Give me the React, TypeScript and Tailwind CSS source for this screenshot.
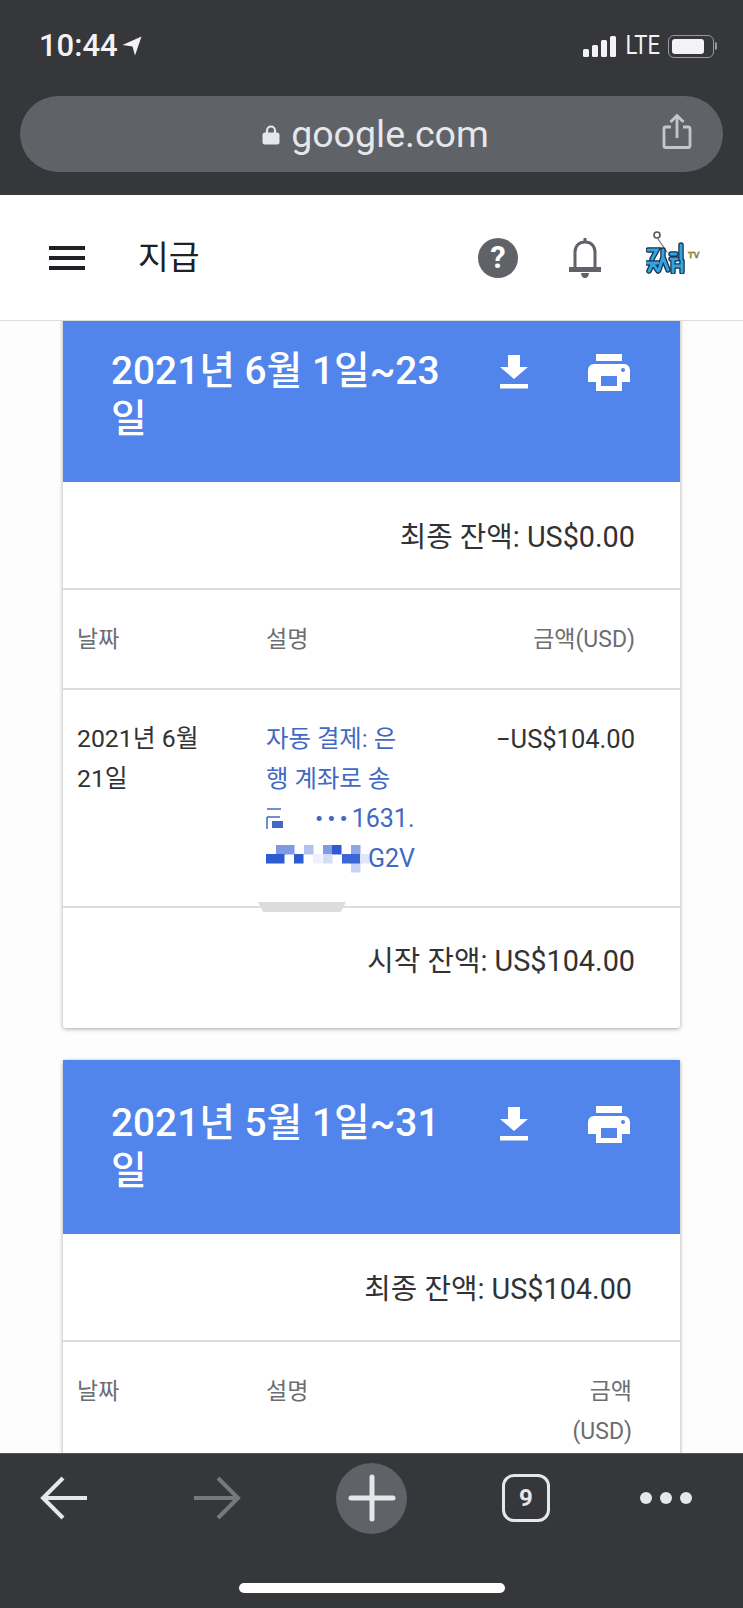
const fontStack = 'font-["Roboto","Noto_Sans_CJK_KR",sans-serif]';

function LocationArrow() {
  return (
    <svg width="20" height="20" viewBox="0 0 20 20" className="ml-[4px]">
      <path d="M0.5 9 19.500 0.500 13 19.500 10.500 10.500Z" fill="#f3f3f5" />
    </svg>
  );
}

function Signal() {
  return (
    <div className="flex items-end gap-[3px]">
      <div className="h-[8px] w-[6px] rounded-[1.500px] bg-[#f3f3f5]" />
      <div className="h-[12px] w-[6px] rounded-[1.500px] bg-[#f3f3f5]" />
      <div className="h-[17px] w-[6px] rounded-[1.500px] bg-[#f3f3f5]" />
      <div className="h-[21px] w-[6px] rounded-[1.500px] bg-[#f3f3f5]" />
    </div>
  );
}

function Battery() {
  return (
    <div className="flex items-center">
      <div className="h-[23px] w-[46px] rounded-[6px] border border-[#98999c] p-[3px]">
        <div className="h-full w-[32px] rounded-[3px] bg-[#f3f3f5]" />
      </div>
      <div className="ml-[1px] h-[8px] w-[2px] rounded-r-full bg-[#98999c]" />
    </div>
  );
}

function ShareIcon() {
  return (
    <svg width="30" height="36" viewBox="0 0 30 36" fill="none" stroke="#c4c6c9" strokeWidth="2.800">
      <path d="M9 13H3.500a1.500 1.500 0 0 0-1.500 1.500V32a1.500 1.500 0 0 0 1.500 1.500h23a1.500 1.500 0 0 0 1.500-1.500V14.500A1.500 1.500 0 0 0 26.500 13H21" />
      <path d="M15 24V2M8.500 8 15 1.500 21.500 8" />
    </svg>
  );
}

function LockIcon() {
  return (
    <svg width="18" height="21" viewBox="0 0 18 21">
      <path d="M5 10V6.500a4 4 0 0 1 8 0V10" fill="none" stroke="#e6e7ea" strokeWidth="2.200" />
      <rect x="0.500" y="8.500" width="17" height="12" rx="2.500" fill="#e6e7ea" />
    </svg>
  );
}

function Logo() {
  const strokes = (
    <>
      <path d="M2 22H11L6 31M1 35H12M7 35 3 43M7 36 12 43" />
      <path d="M17 22V29M17 29 13 42M17 29 22 42" />
      <path d="M25 26H30M25 31H31M27 33V44M36 33V44M27 38H36" />
      <path d="M35 17V31" />
    </>
  );
  return (
    <svg width="56" height="46" viewBox="0 0 56 46" fill="none" strokeLinecap="round">
      <circle cx="11" cy="7" r="3" stroke="#555555" strokeWidth="1.600" />
      <path d="M12 11 21 24" stroke="#777777" strokeWidth="1.300" />
      <g stroke="#12304a" strokeWidth="5.500">{strokes}</g>
      <g stroke="#35a3e0" strokeWidth="3">{strokes}</g>
      <text x="42" y="30" fontSize="9" fontWeight="700" fill="#c2b04a" stroke="#3a3a20" strokeWidth="0.300" fontFamily="Liberation Sans, sans-serif">TV</text>
    </svg>
  );
}

function DownloadIcon() {
  return (
    <svg width="30" height="36" viewBox="0 0 30 36" fill="#ffffff">
      <path d="M9 0H21V12H29L15 24 1 12H9Z" />
      <rect x="1" y="29" width="28" height="4.500" />
    </svg>
  );
}

function PrintIcon() {
  return (
    <svg width="42" height="38" viewBox="0 0 42 38" fill="#ffffff">
      <rect x="8" y="0" width="26" height="7" />
      <path fillRule="evenodd" d="M6 10H36a6 6 0 0 1 6 6V28H34V37H8V28H0V16a6 6 0 0 1 6-6ZM13 22V32H29V22ZM35 14a2 2 0 1 0 0.010 0Z" />
    </svg>
  );
}

function BackArrow({ color, flip }: { color: string; flip?: boolean }) {
  return (
    <svg width="48" height="44" viewBox="0 0 48 44" fill="none" stroke={color} strokeWidth="4" className={flip ? '-scale-x-100' : ''}>
      <path d="M47 22H4M23 2 3 22l20 20" strokeLinejoin="miter" />
    </svg>
  );
}

function StatementHead({ title }: { title: string }) {
  return (
    <div className="flex h-[174px] justify-between bg-[#5285ec] pr-[50px] pl-[48px]">
      <h2 className="mt-[39px] w-[345px] text-[38.800px] leading-[48px] font-medium text-white">{title}</h2>
      <div className="mt-[46px] flex h-[38px] items-center gap-[59px]">
        <DownloadIcon />
        <PrintIcon />
      </div>
    </div>
  );
}

function Balance({ label, className }: { label: string; className: string }) {
  return <div className={`text-right text-[28.800px] leading-[36px] text-[#303236] ${className}`}>{label}</div>;
}

// 파란 링크 위의 모자이크
function Mosaic() {
  const cells: [number, number, string][] = [
    [10, 0, '#7d9ae2'], [19, 0, '#7d9ae2'], [38, 0, '#b2c2ee'], [57, 0, '#7d9ae2'], [66, 0, '#2f5bd0'],
    [0, 9, '#2f5bd0'], [9, 9, '#2f5bd0'], [28, 9, '#2f5bd0'], [47, 9, '#eef1fb'], [57, 9, '#d5ddf6'],
    [85, 0, '#8ea6e6'], [85, 18, '#c7d3f3'], [76, 9, '#3c66d3'], [85, 9, '#3c66d3'], [94, 9, '#dfe6f8'],
  ];
  return (
    <svg width="104" height="28" viewBox="0 0 104 28" className="shrink-0">
      {cells.map(([x, y, fill]) => (
        <rect key={`${x}-${y}`} x={x} y={y} width="9.500" height="9.500" fill={fill} />
      ))}
    </svg>
  );
}

export default function App() {
  return (
    <div className={`flex h-[1608px] w-[743px] flex-col overflow-hidden bg-[#fdfdfd] ${fontStack}`}>
      {/* Browser chrome */}
      <div className="h-[195px] shrink-0 bg-[#36373b] px-[20px]">
        <div className="flex h-[96px] items-start justify-between pt-[29px] pr-[6px] pl-[19px]">
          <div className="flex items-center">
            <span className="text-[31px] leading-[34px] font-medium text-[#f3f3f5]">10:44</span>
            <LocationArrow />
          </div>
          <div className="flex items-center pt-[5px]">
            <Signal />
            <span className="mr-[8px] ml-[9px] scale-y-115 text-[22px] leading-[24px] text-[#f3f3f5]">LTE</span>
            <Battery />
          </div>
        </div>
        <div className="relative flex h-[76px] w-[703px] items-center justify-center rounded-full bg-[#5f6267]">
          <div className="flex items-center gap-[11px] pl-[8px]">
            <LockIcon />
            <span className="text-[37.500px] leading-[44px] text-[#e6e7ea]">google.com</span>
          </div>
          <div className="absolute top-[18px] right-[31px]">
            <ShareIcon />
          </div>
        </div>
      </div>

      {/* App bar */}
      <div className="flex h-[126px] shrink-0 items-center justify-between border-b border-[#dddddd] bg-white pr-[41px] pl-[49px]">
        <div className="flex items-center gap-[53px]">
          <div className="flex w-[36px] flex-col gap-[6px]">
            <div className="h-[4px] bg-[#202124]" />
            <div className="h-[4px] bg-[#202124]" />
            <div className="h-[4px] bg-[#202124]" />
          </div>
          <span className="text-[33.500px] leading-[40px] text-[#202124]">지급</span>
        </div>
        <div className="flex items-center">
          <div className="flex h-[40px] w-[40px] items-center justify-center rounded-full bg-[#5f6368] text-[31px] leading-none font-bold text-white">?</div>
          <svg width="32" height="40" viewBox="0 0 32 40" className="ml-[51px]" fill="none">
            <path d="M14.500 0h3v5h-3Z" fill="#5f6368" />
            <path d="M6 30V14C6 8 10 4 16 4s10 4 10 10v16" stroke="#5f6368" strokeWidth="3" />
            <path d="M0 29H32V34H0ZM12 35H20C20 38 18 40 16 40S12 38 12 35Z" fill="#5f6368" />
          </svg>
          <div className="mb-[14px] ml-[45px]">
            <Logo />
          </div>
        </div>
      </div>

      {/* Statements */}
      <div className="min-h-0 flex-1 overflow-hidden px-[63px]">
        <div className="-mt-[13px] flex flex-col gap-[32px]">
          <section className="rounded-b-[3px] bg-white shadow-[0_1px_4px_rgba(0,0,0,0.35)]">
            <StatementHead title="2021년 6월 1일~23일" />
            <Balance label="최종 잔액: US$0.00" className="border-b-2 border-[#dddddd] pt-[37px] pr-[45px] pb-[33px]" />
            <div className="grid h-[100px] grid-cols-[189px_1fr_auto] items-start border-b-2 border-[#dddddd] pt-[33px] pr-[45px] pl-[14px] text-[23px] leading-[34px] text-[#6b6d71]">
              <span>날짜</span>
              <span>설명</span>
              <span>금액(USD)</span>
            </div>
            <div className="relative grid h-[218px] grid-cols-[189px_1fr_auto] items-start border-b-2 border-[#dddddd] pt-[29px] pr-[45px] pl-[14px] text-[24.800px] leading-[40px] text-[#303236]">
              <div className="w-[145px]">2021년 6월 21일</div>
              <div className="w-[165px] text-[24.400px] text-[#4169c4]">
                <div>자동 결제: 은</div>
                <div>행 계좌로 송</div>
                <div className="flex items-center">
                  <svg width="18" height="24" viewBox="0 0 18 24" className="shrink-0">
                    <path d="M1 2H15M1 10H14M1 10V22" stroke="#4169c4" strokeWidth="1.500" fill="none" />
                    <rect x="6" y="14" width="11" height="7" fill="#4169c4" />
                  </svg>
                  <span className="ml-[31px] tracking-[4px]">•••</span>
                  <span className="text-[25px]">1631.</span>
                </div>
                <div className="flex items-center">
                  <Mosaic />
                  <span className="-ml-[2px] text-[25px]">G2V</span>
                </div>
              </div>
              <span className="text-[25.500px]">−US$104.00</span>
              <div className="absolute bottom-[-6px] left-[195px] z-10 h-[10px] w-[88px] bg-[#dcdcdc] [clip-path:polygon(0_0,100%_0,94%_100%,6%_100%)]" />
            </div>
            <Balance label="시작 잔액: US$104.00" className="h-[120px] pt-[35px] pr-[45px]" />
          </section>

          <section className="rounded-t-[3px] bg-white pb-[60px] shadow-[0_1px_4px_rgba(0,0,0,0.35)]">
            <StatementHead title="2021년 5월 1일~31일" />
            <Balance label="최종 잔액: US$104.00" className="border-b-2 border-[#dddddd] pt-[37px] pr-[48px] pb-[33px]" />
            <div className="grid grid-cols-[189px_1fr_auto] items-start pt-[30px] pr-[48px] pl-[14px] text-[23px] leading-[40px] text-[#6b6d71]">
              <span>날짜</span>
              <span>설명</span>
              <span className="w-[62px] text-right">금액(USD)</span>
            </div>
          </section>
        </div>
      </div>

      {/* Bottom toolbar */}
      <div className="relative z-20 h-[155px] shrink-0 border-t border-[#55565a] bg-[#36373b]">
        <div className="flex h-[88px] items-center pl-[40px]">
          <BackArrow color="#e6e7ea" />
          <div className="ml-[105px]">
            <BackArrow color="#77787b" flip />
          </div>
          <div className="ml-[95px] flex h-[71px] w-[71px] items-center justify-center rounded-full bg-[#5f6267]">
            <svg width="48" height="48" viewBox="0 0 48 48" stroke="#e6e7ea" strokeWidth="5" strokeLinecap="round">
              <path d="M24 3V45M3 24H45" />
            </svg>
          </div>
          <div className="ml-[95px] flex h-[48px] w-[48px] items-center justify-center rounded-[12px] border-[3.500px] border-[#e6e7ea] text-[24px] font-bold text-[#e6e7ea]">9</div>
          <div className="ml-[90px] flex gap-[8px]">
            <div className="h-[12px] w-[12px] rounded-full bg-[#e6e7ea]" />
            <div className="h-[12px] w-[12px] rounded-full bg-[#e6e7ea]" />
            <div className="h-[12px] w-[12px] rounded-full bg-[#e6e7ea]" />
          </div>
        </div>
        <div className="absolute bottom-[15px] left-[239px] h-[10px] w-[266px] rounded-full bg-white" />
      </div>
    </div>
  );
}
